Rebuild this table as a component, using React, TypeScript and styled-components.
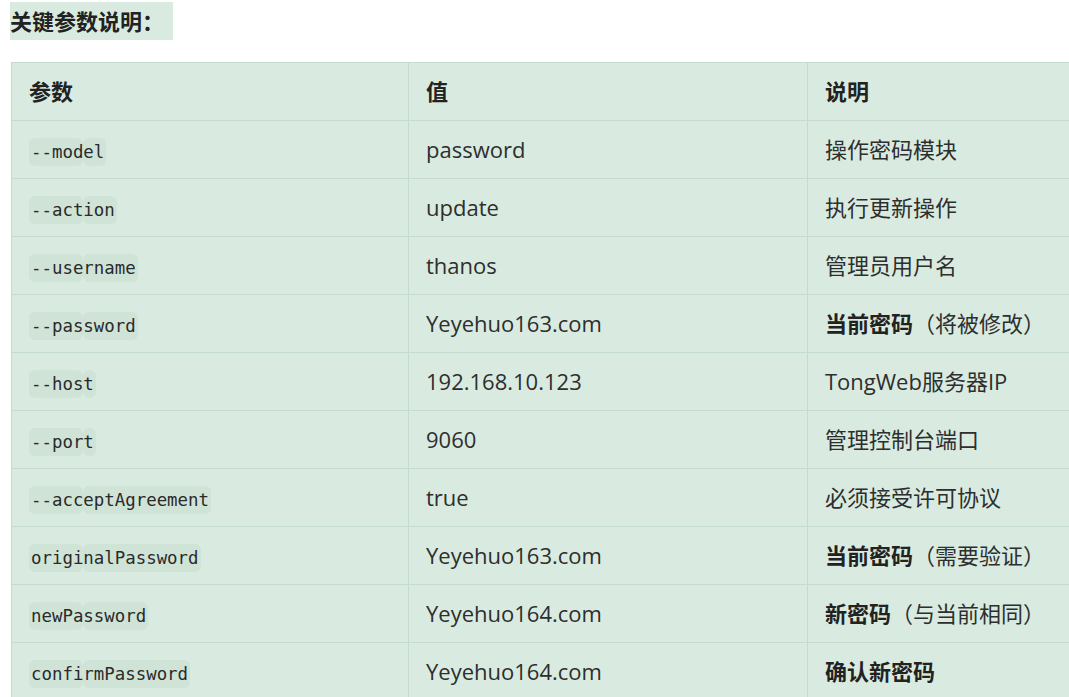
import React from "react";
import styled, { createGlobalStyle } from "styled-components";

const GlobalStyle = createGlobalStyle`
  html, body {
    margin: 0;
    padding: 0;
    background: #ffffff;
    overflow: hidden;
  }
  body {
    font-family: "Open Sans", "Noto Sans CJK SC", sans-serif;
    color: #2b2b2b;
  }
`;

const Page = styled.div`
  padding: 2px 0 0 10px;
  width: 1100px;
`;

const Heading = styled.div`
  display: inline-block;
  background: #d9ebe0;
  font-size: 22px;
  font-weight: 700;
  line-height: 38px;
  padding-right: 9px;
  color: #222;
`;

const Table = styled.table`
  margin-top: 22px;
  margin-left: 1px;
  border-collapse: collapse;
  width: 1080px;
  background: #d9ebe0;
  font-size: 22px;
  table-layout: fixed;
`;

const Th = styled.th<{ $w?: number }>`
  box-sizing: border-box;
  width: ${(p) => (p.$w ? `${p.$w}px` : "auto")};
  text-align: left;
  font-weight: 700;
  color: #222;
  border: 1px solid #c4dccd;
  padding: 11px 17px;
  line-height: 35px;
`;

const Td = styled.td`
  border: 1px solid #c4dccd;
  padding: 11px 17px;
  height: 35px;
  line-height: 35px;
  white-space: nowrap;
  color: #2e2e2e;
`;

const Code = styled.code`
  position: relative;
  z-index: 0;
  font-family: "DejaVu Sans Mono", "Liberation Mono", monospace;
  font-size: 17.4px;
  line-height: 20px;
  padding: 4px 2px;
  color: #2a2a2a;
  &::before,
  &::after {
    content: "";
    position: absolute;
    top: 0;
    bottom: 0;
    z-index: -1;
    background: #d0e3d7;
    border-radius: 6px;
  }
  &::before {
    left: 0;
    width: 54px;
  }
  &::after {
    left: 54px;
    right: 0;
  }
`;

const Strong = styled.strong`
  font-weight: 700;
  color: #222;
`;

type Row = { param: string; value: string; bold?: string; note?: string };

const rows: Row[] = [
  { param: "--model", value: "password", note: "操作密码模块" },
  { param: "--action", value: "update", note: "执行更新操作" },
  { param: "--username", value: "thanos", note: "管理员用户名" },
  { param: "--password", value: "Yeyehuo163.com", bold: "当前密码", note: "（将被修改）" },
  { param: "--host", value: "192.168.10.123", note: "TongWeb服务器IP" },
  { param: "--port", value: "9060", note: "管理控制台端口" },
  { param: "--acceptAgreement", value: "true", note: "必须接受许可协议" },
  { param: "originalPassword", value: "Yeyehuo163.com", bold: "当前密码", note: "（需要验证）" },
  { param: "newPassword", value: "Yeyehuo164.com", bold: "新密码", note: "（与当前相同）" },
  { param: "confirmPassword", value: "Yeyehuo164.com", bold: "确认新密码" },
];

const App = () => {
  return (
    <Page>
      <GlobalStyle />
      <Heading>关键参数说明：</Heading>
      <Table>
        <thead>
          <tr>
            <Th $w={397}>参数</Th>
            <Th $w={399}>值</Th>
            <Th>说明</Th>
          </tr>
        </thead>
        <tbody>
          {rows.map((r) => (
            <tr key={r.param}>
              <Td>
                <Code>{r.param}</Code>
              </Td>
              <Td>{r.value}</Td>
              <Td>
                {r.bold && <Strong>{r.bold}</Strong>}
                {r.note}
              </Td>
            </tr>
          ))}
        </tbody>
      </Table>
    </Page>
  );
};

export default App;
